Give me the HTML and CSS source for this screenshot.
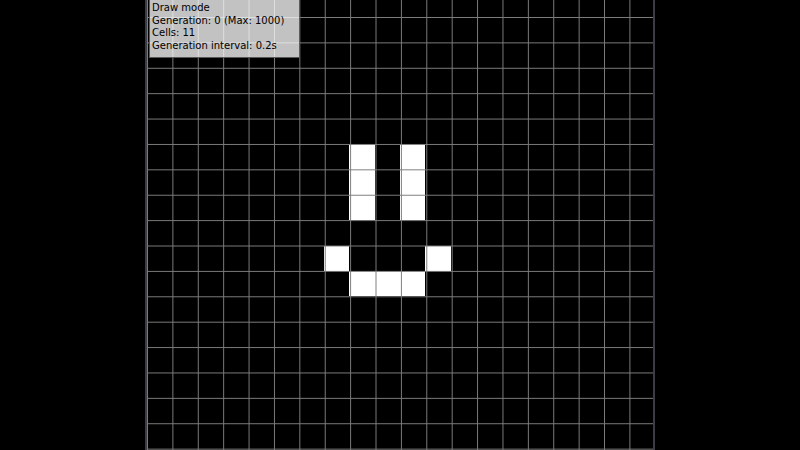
FILE: index.html
```html
<!DOCTYPE html>
<html>
<head>
<meta charset="utf-8">
<link rel="stylesheet" href="styles.css">
</head>
<body>
<div class="board">
  <div class="cells">
    <div class="cell" style="grid-area: 6 / 9"></div>
    <div class="cell" style="grid-area: 6 / 11"></div>
    <div class="cell" style="grid-area: 7 / 9"></div>
    <div class="cell" style="grid-area: 7 / 11"></div>
    <div class="cell" style="grid-area: 8 / 9"></div>
    <div class="cell" style="grid-area: 8 / 11"></div>
    <div class="cell" style="grid-area: 10 / 8"></div>
    <div class="cell" style="grid-area: 10 / 12"></div>
    <div class="cell" style="grid-area: 11 / 9"></div>
    <div class="cell" style="grid-area: 11 / 10"></div>
    <div class="cell" style="grid-area: 11 / 11"></div>
  </div>
  <div class="info">
    <div class="line">Draw mode</div>
    <div class="line">Generation: 0 (Max: 1000)</div>
    <div class="line">Cells: 11</div>
    <div class="line">Generation interval: 0.2s</div>
  </div>
</div>
</body>
</html>
```
FILE: styles.css
```css
html, body {
  margin: 0;
  padding: 0;
  background: #000;
  width: 800px;
  height: 450px;
  overflow: hidden;
}
.board {
  position: relative;
  width: 508px;
  height: 450px;
  margin: 0 auto;
  background: #000;
}
.board::after {
  content: "";
  position: absolute;
  inset: 0;
  background-image:
    linear-gradient(to right, #7c7c7c 1px, transparent 1px),
    linear-gradient(to bottom, #7c7c7c 1px, transparent 1px);
  background-size: 25.4px 25.4px;
  background-position: 0 17px;
  border-left: 2px solid #3c3c46;
  border-right: 2px solid #3c3c46;
  margin: 0 -1px;
  pointer-events: none;
}
.cells {
  display: grid;
  grid-template-columns: repeat(20, 25.4px);
  grid-auto-rows: 25.4px;
  padding-top: 17px;
}
.cell {
  background: #fff;
}
.info {
  position: absolute;
  top: 0;
  left: 3px;
  z-index: 2;
  width: 151px;
  height: 58px;
  padding: 2px 0 0 2px;
  box-sizing: border-box;
  background: rgba(255, 255, 255, 0.76);
  border: 1px solid rgba(60, 60, 60, 0.8);
  border-top: none;
  font-family: "DejaVu Sans", sans-serif;
  font-size: 10px;
  line-height: 12.5px;
  color: #000;
}
.line {
  white-space: nowrap;
}
```
